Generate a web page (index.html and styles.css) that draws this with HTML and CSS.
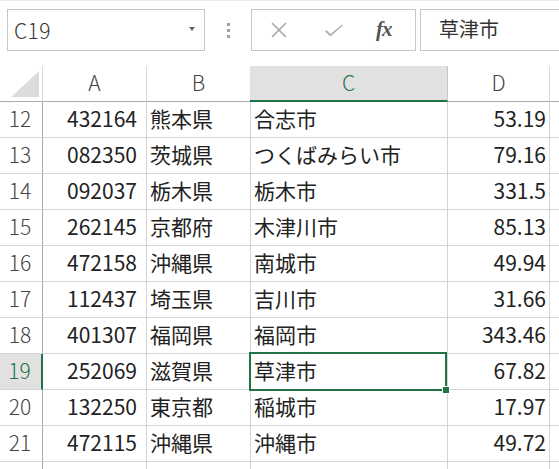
FILE: index.html
```html
<!DOCTYPE html>
<html lang="ja">
<head>
<meta charset="utf-8">
<link rel="stylesheet" href="styles.css">
</head>
<body>
<div class="app">
  <div class="toolbar">
    <div class="namebox">
      <span class="name">C19</span>
      <span class="caret"></span>
    </div>
    <div class="grip"><span></span><span></span><span></span></div>
    <div class="fxbox">
      <svg class="ico ico-x" width="18" height="16" viewBox="0 0 18 16"><path d="M2 1 L16 15 M16 1 L2 15" stroke="#a8a8a8" stroke-width="1.6" fill="none"/></svg>
      <svg class="ico ico-check" width="20" height="14" viewBox="0 0 20 14"><path d="M1 7.5 L6.5 12.5 L19 1.5 L18 0.5 L6.5 10 L2.3 6 Z" fill="#b4b4b4"/></svg>
      <span class="fx">fx</span>
    </div>
    <div class="formula">草津市</div>
  </div>
  <div class="sheet">
    <div class="corner"><span class="tri"></span></div>
    <div class="ch">A</div>
    <div class="ch">B</div>
    <div class="ch sel">C</div>
    <div class="ch">D</div>
    <div class="ch last"></div>

    <div class="rh">12</div><div class="c n">432164</div><div class="c t">熊本県</div><div class="c t">合志市</div><div class="c n d">53.19</div><div class="c last"></div>
    <div class="rh">13</div><div class="c n">082350</div><div class="c t">茨城県</div><div class="c t">つくばみらい市</div><div class="c n d">79.16</div><div class="c last"></div>
    <div class="rh">14</div><div class="c n">092037</div><div class="c t">栃木県</div><div class="c t">栃木市</div><div class="c n d">331.5</div><div class="c last"></div>
    <div class="rh">15</div><div class="c n">262145</div><div class="c t">京都府</div><div class="c t">木津川市</div><div class="c n d">85.13</div><div class="c last"></div>
    <div class="rh">16</div><div class="c n">472158</div><div class="c t">沖縄県</div><div class="c t">南城市</div><div class="c n d">49.94</div><div class="c last"></div>
    <div class="rh">17</div><div class="c n">112437</div><div class="c t">埼玉県</div><div class="c t">吉川市</div><div class="c n d">31.66</div><div class="c last"></div>
    <div class="rh">18</div><div class="c n">401307</div><div class="c t">福岡県</div><div class="c t">福岡市</div><div class="c n d">343.46</div><div class="c last"></div>
    <div class="rh sel">19</div><div class="c n">252069</div><div class="c t">滋賀県</div><div class="c t active">草津市<span class="selbox"><span class="handle"></span></span></div><div class="c n d">67.82</div><div class="c last"></div>
    <div class="rh">20</div><div class="c n">132250</div><div class="c t">東京都</div><div class="c t">稲城市</div><div class="c n d">17.97</div><div class="c last"></div>
    <div class="rh">21</div><div class="c n">472115</div><div class="c t">沖縄県</div><div class="c t">沖縄市</div><div class="c n d">49.72</div><div class="c last"></div>
    <div class="rh"></div><div class="c"></div><div class="c"></div><div class="c"></div><div class="c"></div><div class="c last"></div>
  </div>
</div>
</body>
</html>
```
FILE: styles.css
```css
* { box-sizing: border-box; }
html, body { margin: 0; padding: 0; background: #fff; }
body {
  width: 559px;
  height: 469px;
  overflow: hidden;
  font-family: "Noto Sans CJK JP", "Noto Sans", sans-serif;
  color: #222;
}
.app { width: 559px; height: 469px; overflow: hidden; }
.toolbar {
  height: 66px;
  display: flex;
  align-items: flex-start;
  padding-top: 9px;
  padding-left: 7px;
  border-top: 1px solid #ececec;
}
.namebox {
  width: 198px;
  height: 42px;
  margin-top: -1px;
  border: 1px solid #c6c6c6;
  display: flex;
  align-items: center;
  justify-content: space-between;
  padding: 0 9px 0 6px;
}
.name { font-size: 21px; color: #333; font-weight: 300; letter-spacing: 0.4px; }
.caret {
  width: 0; height: 0;
  border-left: 3.5px solid transparent;
  border-right: 3.5px solid transparent;
  border-top: 4px solid #666;
  margin-top: -3px;
}
.grip {
  width: 46px;
  height: 42px;
  display: flex;
  flex-direction: column;
  align-items: center;
  justify-content: center;
  gap: 3px;
  margin-top: -1px;
}
.grip span { width: 3px; height: 3px; background: #a0a0a0; }
.fxbox {
  width: 165px;
  height: 42px;
  margin-top: -1px;
  border: 1px solid #c6c6c6;
  display: flex;
  align-items: center;
  padding-left: 18px;
}
.ico-x { margin-right: 36px; }
.ico-check { margin-right: 32px; margin-top: 2px; }
.fx {
  font-family: "Liberation Serif", "DejaVu Serif", serif;
  font-style: italic;
  font-weight: bold;
  font-size: 21px;
  color: #555;
  letter-spacing: -1px;
  margin-top: -2px;
}
.formula {
  flex: 1;
  height: 42px;
  margin-top: -1px;
  margin-left: 4px;
  border: 1px solid #c6c6c6;
  border-right: none;
  font-size: 20px;
  color: #333;
  padding-left: 18px;
  line-height: 38px;
}
.sheet {
  display: grid;
  grid-template-columns: 43px 104px 104px 197px 102px 1fr;
  grid-template-rows: 36px repeat(11, 36px);
}
.corner {
  position: relative;
  border-right: 1px solid #dadada;
  border-bottom: 1px solid #ababab;
}
.tri {
  position: absolute;
  left: 11px;
  top: 5px;
  width: 0; height: 0;
  border-left: 28px solid transparent;
  border-bottom: 26px solid #dcdcdc;
}
.ch {
  border-right: 1px solid #dadada;
  border-bottom: 1px solid #ababab;
  text-align: center;
  font-size: 21px;
  font-weight: 300;
  color: #444;
  line-height: 33px;
}
.ch.sel {
  background: #e1e1e1;
  color: #217346;
  border-bottom: 2px solid #217346;
  margin-left: -1px;
  border-right: 1px solid #c6c6c6;
}
.ch.last, .c.last { border-right: none; }
.rh {
  border-right: 1px solid #ababab;
  border-bottom: 1px solid #d4d4d4;
  text-align: center;
  font-size: 21px;
  font-weight: 300;
  color: #444;
  line-height: 32px;
  padding-right: 2px;
}
.rh.sel {
  background: #e1e1e1;
  color: #217346;
  border-right: 2px solid #217346;
}
.c {
  border-right: 1px solid #d4d4d4;
  border-bottom: 1px solid #d4d4d4;
  font-size: 21px;
  line-height: 32px;
  white-space: nowrap;
  overflow: visible;
}
.c.n { text-align: right; padding-right: 9px; }
.c.n.d { padding-right: 3px; }
.c.t { padding-left: 3px; }
.c.active { position: relative; }
.selbox {
  position: absolute;
  left: -2px;
  top: -2px;
  right: 0;
  bottom: -2px;
  border: 2px solid #217346;
}
.handle {
  position: absolute;
  right: -5px;
  bottom: -5px;
  width: 8px;
  height: 8px;
  background: #217346;
  border: 1px solid #fff;
}
```
